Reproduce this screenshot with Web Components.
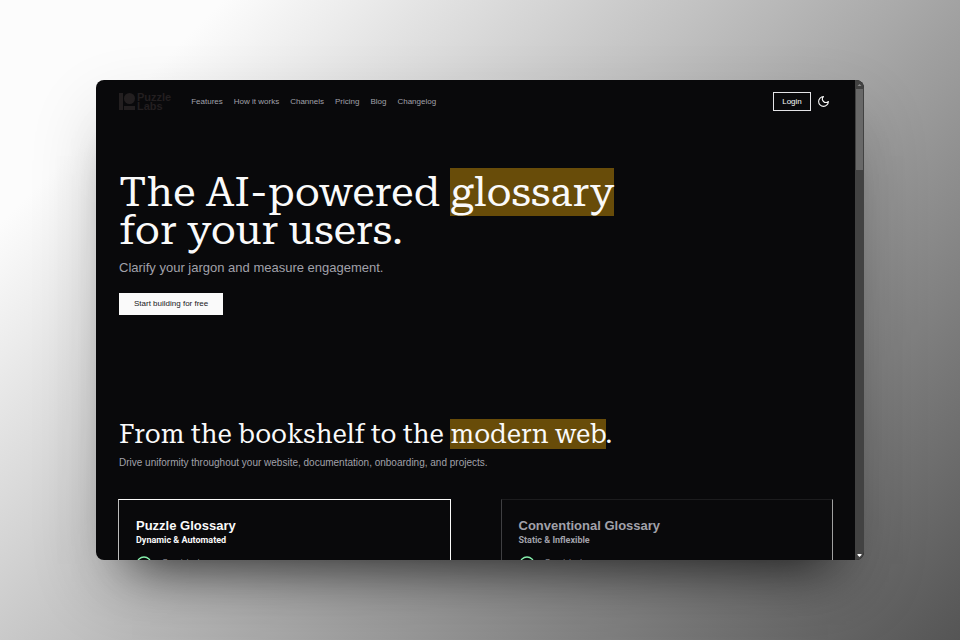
<!DOCTYPE html>
<html lang="en">
<head>
<meta charset="utf-8">
<meta name="viewport" content="width=device-width, initial-scale=1">
<title>Puzzle Labs</title>
<style>
body { margin: 0; font-family: "Liberation Sans", Arial, sans-serif; --slab: "Roboto Slab", "Roboto Serif", "DejaVu Serif", serif; }
</style>
</head>
<body>
<browser-stage>
  <browser-window>
    <site-header></site-header>
    <page-hero></page-hero>
    <page-compare>
      <glossary-card active heading="Puzzle Glossary" tagline="Dynamic &amp; Automated">Consistent</glossary-card>
      <glossary-card heading="Conventional Glossary" tagline="Static &amp; Inflexible">Consistent</glossary-card>
    </page-compare>
  </browser-window>
</browser-stage>
<script>
function define(name, html) {
  customElements.define(name, class extends HTMLElement {
    constructor() {
      super();
      const root = this.attachShadow({ mode: 'open' });
      const template = document.createElement('template');
      template.innerHTML = html;
      root.append(template.content.cloneNode(true));
    }
    connectedCallback() {
      for (const el of this.shadowRoot.querySelectorAll('[data-attr]'))
        el.textContent = this.getAttribute(el.dataset.attr);
    }
  });
}

define('browser-stage', `
<style>
:host { display: grid; box-sizing: border-box; height: 100vh; padding: 12.5vh 10vw; grid-template-rows: minmax(0, 1fr);
  background: linear-gradient(135deg, #fcfcfc 14%, #555 100%); }
</style><slot></slot>`);

define('browser-window', `
<style>
:host { display: flex; min-width: 0; overflow: hidden; border-radius: 8px; background: #09090b; color: #fafafa;
  box-shadow: 0 40px 50px -36px rgba(0,0,0,.75), 0 30px 70px rgba(0,0,0,.14); }
.page { flex: 1; min-width: 0; overflow: hidden; padding: 0 22px 0 23px; }
.bar { display: flex; flex-direction: column; align-items: center; width: 9px; background: #424242; }
svg { width: 9px; height: 9px; }
.track { flex: 1; align-self: stretch; padding: 0 1px; }
.thumb { height: 17.5%; background: #686868; }
</style>
<div class="page"><slot></slot></div>
<div class="bar">
  <svg viewBox="0 0 9 9"><path d="M2.500 6h4l-2-2z" fill="#8a8a8a"/></svg>
  <div class="track"><div class="thumb"></div></div>
  <svg viewBox="0 0 9 9"><path d="M2.500 3h4v1l-2 2-2-2z" fill="#fff"/></svg>
</div>`);

define('puzzle-logo', `
<style>
:host { display: flex; align-items: center; gap: 2px; color: #231f20; font-size: 11px; line-height: 9px; font-weight: 700; }
svg { width: 16px; height: 18px; }
</style>
<svg viewBox="0 0 16 18" fill="currentColor"><path d="M0 0h4v17H0zM5 13h11v4H5z"/><circle cx="10.500" cy="5.500" r="5.500"/></svg>
<span>Puzzle<br>Labs</span>`);

define('site-header', `
<style>
:host { display: flex; align-items: center; height: 43px; font-size: 8px; line-height: 12px; }
nav { display: flex; gap: 11px; margin-left: 20px; flex: 1; }
a { color: #a1a1aa; text-decoration: none; }
button { font: inherit; color: #fafafa; background: none; border: 1px solid #e4e4e7; padding: 0; cursor: pointer; }
.login { width: 38px; height: 19px; }
.theme { border: 0; margin: 0 3px 0 6px; }
svg { display: block; width: 13px; height: 13px; }
</style>
<puzzle-logo></puzzle-logo>
<nav><a href="#features">Features</a><a href="#how">How it works</a><a href="#channels">Channels</a><a href="#pricing">Pricing</a><a href="#blog">Blog</a><a href="#changelog">Changelog</a></nav>
<button class="login">Login</button>
<button class="theme" aria-label="Toggle theme"><svg viewBox="0 0 24 24" fill="none" stroke="currentColor" stroke-width="2" stroke-linejoin="round"><path d="M12 3a6 6 0 0 0 9 9 9 9 0 1 1-9-9Z"/></svg></button>`);

define('page-hero', `
<style>
:host { display: block; padding: 50px 0 104px; }
h1 { margin: 0; font: 400 41px/38px var(--slab); }
mark { background: #684c09; color: inherit; }
p { margin: 10px 0 15px; font-size: 13px; line-height: 18px; color: #a1a1aa; }
button { font: inherit; font-size: 8px; line-height: 12px; color: #18181b; background: #fafafa; border: 0; padding: 5px 15px; cursor: pointer; }
</style>
<h1>The AI-powered <mark>glossary</mark><br>for your users.</h1>
<p>Clarify your jargon and measure engagement.</p>
<button>Start building for free</button>`);

define('page-compare', `
<style>
:host { display: block; }
h2 { margin: 0; font: 400 26px/30px var(--slab); }
mark { background: #684c09; color: inherit; }
p { margin: 7px 0 29px; font-size: 10px; line-height: 14px; color: #a1a1aa; }
.cards { display: grid; grid-template-columns: 1fr 1fr; gap: 50px; margin-left: -1px; }
</style>
<h2>From the bookshelf to the <mark>modern web</mark>.</h2>
<p>Drive uniformity throughout your website, documentation, onboarding, and projects.</p>
<div class="cards"><slot></slot></div>`);

define('glossary-card', `
<style>
:host { display: block; padding: 17px; border: 1px solid; border-color: #1c1c1e #a1a1a1 #a1a1a1 #3f3f42; color: #a1a1aa; }
:host([active]) { border-color: #fafafa #fafafa #fafafa #bbb; color: #fafafa; }
h3 { margin: 0; font-size: 13px; line-height: 17px; }
h4 { margin: 0; font: 700 9px/13px Roboto, "Liberation Sans", sans-serif; }
.item { display: flex; align-items: flex-start; gap: 10px; margin-top: 8px; font-size: 8px; line-height: 14px; color: #a1a1aa; }
svg { width: 16px; height: 16px; }
</style>
<h3 data-attr="heading"></h3>
<h4 data-attr="tagline"></h4>
<div class="item"><svg viewBox="0 0 16 16" fill="none" stroke="#86efac" stroke-width="1.300"><circle cx="8" cy="9" r="7"/><path d="m5 9 2 2 4-4"/></svg><slot></slot></div>`);
</script>
</body>
</html>
